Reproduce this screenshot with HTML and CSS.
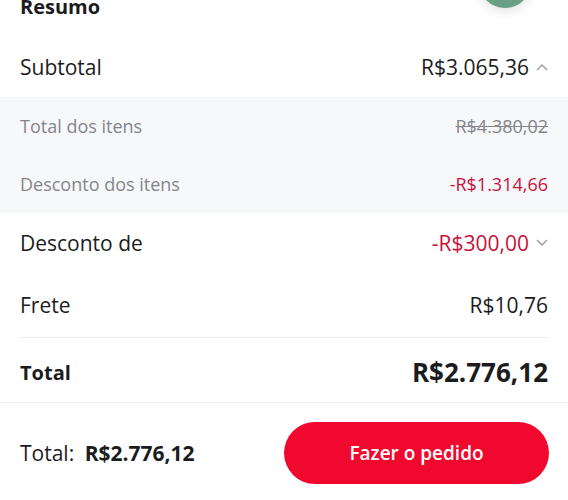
FILE: index.html
```html
<!DOCTYPE html>
<html lang="pt-BR">
<head>
  <meta charset="UTF-8">
  <meta name="viewport" content="width=device-width, initial-scale=1.0">
  <title>Resumo do pedido</title>
  <link rel="stylesheet" href="styles.css">
</head>
<body>
  <div class="page">
    <div class="fab"></div>
    <h2 class="title">Resumo</h2>

    <div class="row">
      <span>Subtotal</span>
      <span class="value">R$3.065,36
        <svg class="chev" viewBox="0 0 12 8" width="12" height="8"><path d="M1 7 L6 2 L11 7" /></svg>
      </span>
    </div>

    <div class="details">
      <div class="row small">
        <span>Total dos itens</span>
        <span class="old">R$4.380,02</span>
      </div>
      <div class="row small">
        <span>Desconto dos itens</span>
        <span class="red">-R$1.314,66</span>
      </div>
    </div>

    <div class="row">
      <span>Desconto de</span>
      <span class="value red">-R$300,00
        <svg class="chev" viewBox="0 0 12 8" width="12" height="8"><path d="M1 1 L6 6 L11 1" /></svg>
      </span>
    </div>

    <div class="row tall">
      <span>Frete</span>
      <span>R$10,76</span>
    </div>

    <div class="row total">
      <span>Total</span>
      <span class="big">R$2.776,12</span>
    </div>

    <div class="footer">
      <div class="footer-total">Total: <strong>R$2.776,12</strong></div>
      <button class="order-btn">Fazer o pedido</button>
    </div>
  </div>
</body>
</html>
```

FILE: styles.css
```css
body {
  margin: 0;
  font-family: "Open Sans", Lato, sans-serif;
  color: #1c1c1e;
  background: #fff;
}
.page {
  position: relative;
  height: 500px;
  overflow: hidden;
}
.fab {
  position: absolute;
  top: -44px;
  left: 479px;
  width: 52px;
  height: 52px;
  border-radius: 50%;
  background: #689f85;
  box-shadow: 0 3px 12px rgba(0, 0, 0, 0.12);
}
.title {
  margin: -6px 0 0;
  padding: 0 20px 17px;
  font-size: 20px;
  line-height: 26px;
  font-weight: 700;
}
.row {
  display: flex;
  justify-content: space-between;
  align-items: center;
  height: 60px;
  padding: 0 20px;
  font-size: 21px;
}
.row.tall {
  height: 64px;
}
.value {
  display: flex;
  align-items: center;
  gap: 7px;
}
.chev {
  fill: none;
  stroke: #9a9aa0;
  stroke-width: 1.4;
}
.details {
  background: #f7f8fa;
}
.row.small {
  height: 58px;
  font-size: 18px;
  color: #85858c;
}
.old {
  text-decoration: line-through;
}
.red {
  color: #c8123a;
}
.row.total {
  height: 60px;
  margin: 0 20px;
  padding: 4px 0 0;
  border-top: 1px solid #ececec;
  font-size: 20px;
  font-weight: 700;
}
.big {
  font-size: 26px;
}
.footer {
  display: flex;
  justify-content: space-between;
  align-items: center;
  border-top: 1px solid #ececec;
  padding: 19px 19px 0 20px;
}
.footer-total {
  font-size: 21px;
}
.footer-total strong {
  margin-left: 5px;
  font-size: 21px;
  font-weight: 700;
}
.order-btn {
  width: 265px;
  height: 62px;
  border: none;
  border-radius: 31px;
  background: #f0082e;
  color: #fff;
  font-family: inherit;
  font-size: 19px;
  font-weight: 600;
  cursor: pointer;
}
```
